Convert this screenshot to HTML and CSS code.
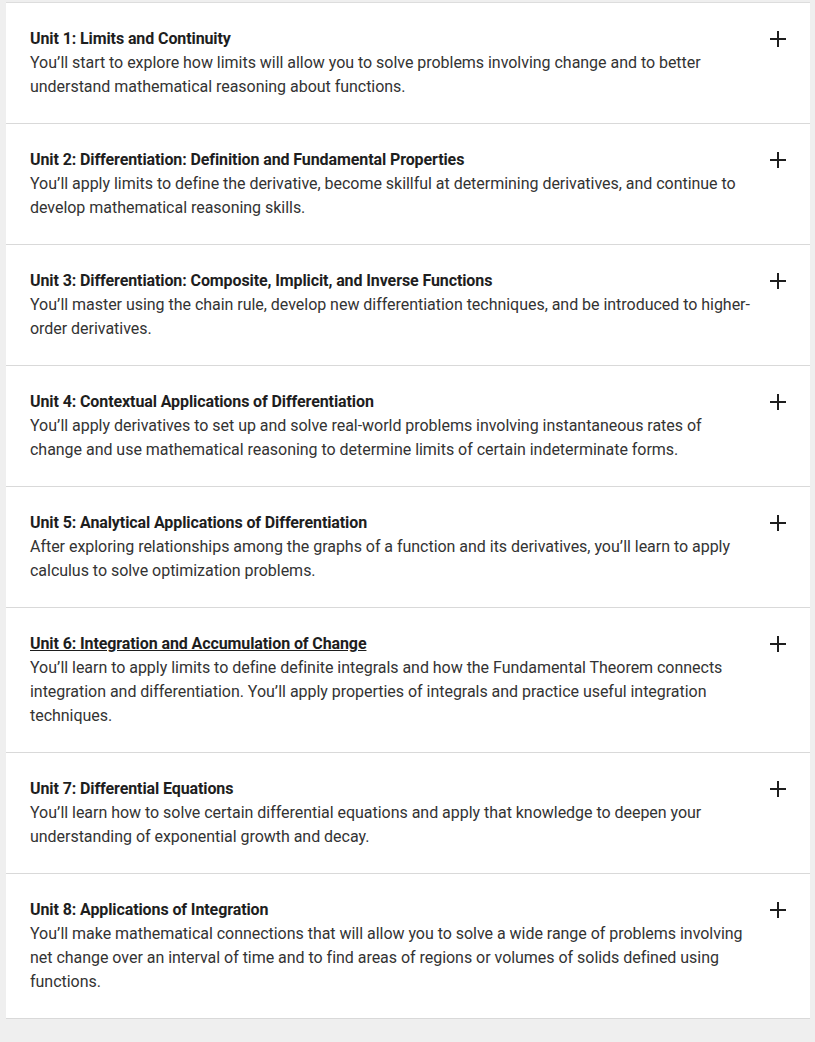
FILE: index.html
```html
<!DOCTYPE html>
<html>
<head>
  <meta charset="utf-8">
  <meta name="viewport" content="width=device-width">
  <title>AP Calculus AB | Course Units</title>
  <link rel="stylesheet" href="styles.css">
</head>
<body>

<div class="units">

  <div class="unit">
    <div class="unit-text">
      <h3>Unit 1: Limits and Continuity</h3>
      <p>You’ll start to explore how limits will allow you to solve problems involving change and to better understand mathematical reasoning about functions.</p>
    </div>
    <span class="toggle"></span>
  </div>

  <div class="unit">
    <div class="unit-text">
      <h3>Unit 2: Differentiation: Definition and Fundamental Properties</h3>
      <p>You’ll apply limits to define the derivative, become skillful at determining derivatives, and continue to develop mathematical reasoning skills.</p>
    </div>
    <span class="toggle"></span>
  </div>

  <div class="unit">
    <div class="unit-text">
      <h3>Unit 3: Differentiation: Composite, Implicit, and Inverse Functions</h3>
      <p>You’ll master using the chain rule, develop new differentiation techniques, and be introduced to higher-order derivatives.</p>
    </div>
    <span class="toggle"></span>
  </div>

  <div class="unit">
    <div class="unit-text">
      <h3>Unit 4: Contextual Applications of Differentiation</h3>
      <p>You’ll apply derivatives to set up and solve real-world problems involving instantaneous rates of change and use mathematical reasoning to determine limits of certain indeterminate forms.</p>
    </div>
    <span class="toggle"></span>
  </div>

  <div class="unit">
    <div class="unit-text">
      <h3>Unit 5: Analytical Applications of Differentiation</h3>
      <p>After exploring relationships among the graphs of a function and its derivatives, you’ll learn to apply calculus to solve optimization problems.</p>
    </div>
    <span class="toggle"></span>
  </div>

  <div class="unit">
    <div class="unit-text">
      <h3><a href="#">Unit 6: Integration and Accumulation of Change</a></h3>
      <p>You’ll learn to apply limits to define definite integrals and how the Fundamental Theorem connects integration and differentiation. You’ll apply properties of integrals and practice useful integration techniques.</p>
    </div>
    <span class="toggle"></span>
  </div>

  <div class="unit">
    <div class="unit-text">
      <h3>Unit 7: Differential Equations</h3>
      <p>You’ll learn how to solve certain differential equations and apply that knowledge to deepen your understanding of exponential growth and decay.</p>
    </div>
    <span class="toggle"></span>
  </div>

  <div class="unit">
    <div class="unit-text">
      <h3>Unit 8: Applications of Integration</h3>
      <p>You’ll make mathematical connections that will allow you to solve a wide range of problems involving net change over an interval of time and to find areas of regions or volumes of solids defined using functions.</p>
    </div>
    <span class="toggle"></span>
  </div>

</div>

</body>
</html>
```

FILE: styles.css
```css
body {
  font-family: Roboto, "Liberation Sans", sans-serif;
  margin: 0;
  padding: 0;
  background-color: #efefef;
}
.units {
  margin: 2px 5px 24px 6px;
  background-color: #fff;
  border-top: 1px solid #ddd;
}
.unit {
  display: flex;
  align-items: flex-start;
  gap: 14px;
  padding: 24px;
  border-bottom: 1px solid #d9d9d9;
}
.unit-text {
  flex: 1;
}
.unit h3 {
  margin: 0;
  font-size: 16px;
  line-height: 24px;
  font-weight: 700;
  color: #1e1e1e;
  letter-spacing: -0.1px;
}
.unit h3 a {
  color: #1e1e1e;
  text-decoration: underline;
}
.unit p {
  margin: 0;
  font-size: 16px;
  line-height: 24px;
  color: #333;
  letter-spacing: -0.03px;
}
/* plus sign drawn from two bars */
.toggle {
  position: relative;
  width: 16px;
  height: 16px;
  margin-top: 4px;
  flex: none;
}
.toggle::before,
.toggle::after {
  content: "";
  position: absolute;
  background-color: #1e1e1e;
}
.toggle::before {
  left: 0;
  top: 7px;
  width: 16px;
  height: 2px;
}
.toggle::after {
  left: 7px;
  top: 0;
  width: 2px;
  height: 16px;
}
```
